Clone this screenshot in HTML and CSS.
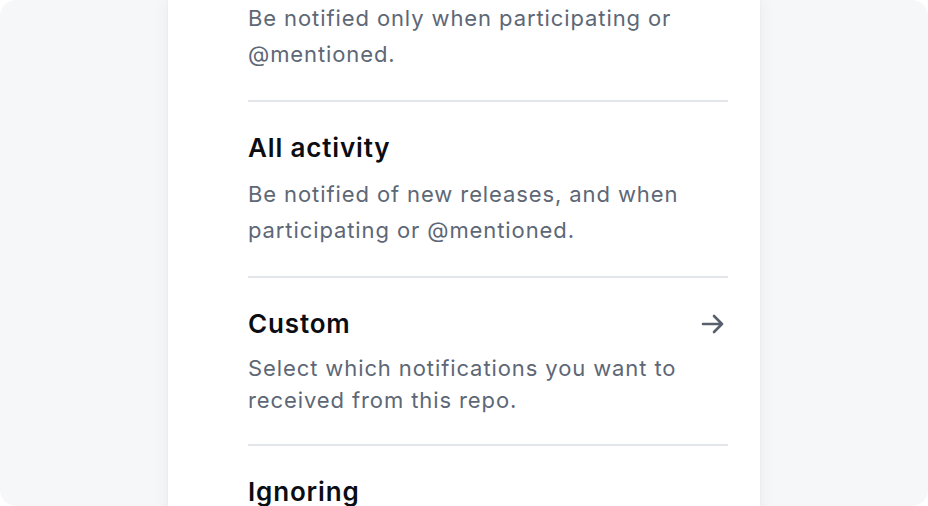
FILE: index.html
```html
<!DOCTYPE html>
<html lang="en">
<head>
<meta charset="utf-8">
<title>Notifications</title>
<link rel="stylesheet" href="styles.css">
</head>
<body>
<div class="frame">
  <div class="card">
    <div class="option option-first">
      <p class="desc">Be notified only when participating or @mentioned.</p>
    </div>
    <div class="option">
      <div class="title-row"><h3 class="title">All activity</h3></div>
      <p class="desc">Be notified of new releases, and when participating or @mentioned.</p>
    </div>
    <div class="option">
      <div class="title-row">
        <h3 class="title">Custom</h3>
        <svg class="arrow" width="24" height="24" viewBox="0 0 24 24" fill="none" stroke="currentColor" stroke-width="2.6" stroke-linecap="round" stroke-linejoin="round"><path d="M2 12h19M13 4l8 8-8 8"/></svg>
      </div>
      <p class="desc desc-tight">Select which notifications you want to received from this repo.</p>
    </div>
    <div class="option option-last">
      <div class="title-row"><h3 class="title">Ignoring</h3></div>
    </div>
  </div>
</div>
</body>
</html>
```
FILE: styles.css
```css
* { box-sizing: border-box; }
html, body { margin: 0; padding: 0; background: #ffffff; }
body {
  font-family: Inter, "Noto Sans", sans-serif;
  -webkit-font-smoothing: antialiased;
}
.frame {
  width: 928px;
  height: 506px;
  border-radius: 16px;
  background: #f6f7f9;
  overflow: hidden;
}
.card {
  width: 592px;
  margin: 0 auto;
  min-height: 506px;
  background: #ffffff;
  padding: 0 32px 0 80px;
  box-shadow: 0 0 16px rgba(30, 40, 60, 0.06), 0 0 2px rgba(30, 40, 60, 0.05);
}
.option {
  width: 480px;
  padding: 30px 0 28px;
  border-bottom: 2px solid #e2e5e9;
}
.option-first { padding-top: 0; }
.option-last { border-bottom: none; }
.title-row {
  display: flex;
  align-items: center;
  justify-content: space-between;
  height: 32px;
}
.title {
  margin: 0;
  font-size: 26px;
  line-height: 32px;
  font-weight: 600;
  color: #0b0d12;
  letter-spacing: 0.85px;
}
.arrow {
  color: #58606e;
  margin-right: 3px;
}
.desc {
  margin: 12px 0 0;
  font-size: 22px;
  line-height: 36px;
  color: #5d6776;
  font-weight: 400;
  letter-spacing: 0.9px;
}
.option-first .desc { margin-top: 0; }
.desc-tight { line-height: 32px; }
```
